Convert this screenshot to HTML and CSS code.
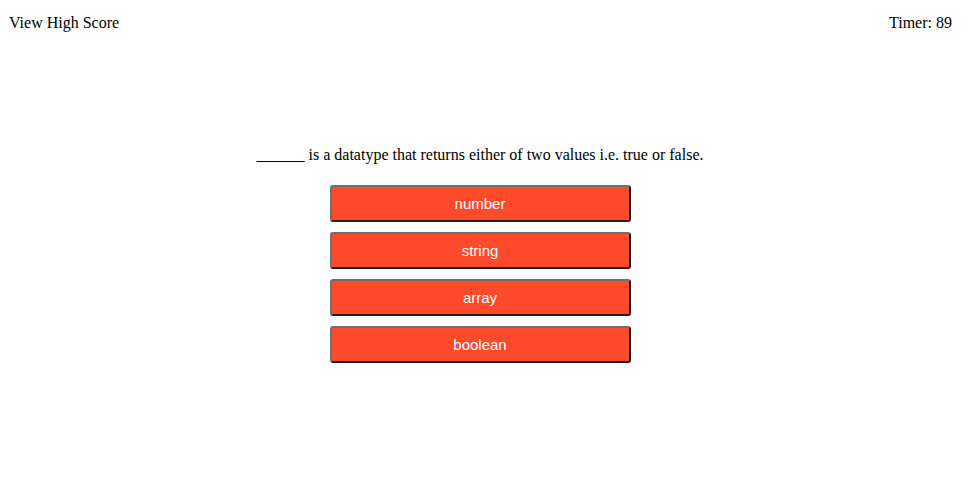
FILE: index.html
```html
<!DOCTYPE html>
<html>
<head>
<meta charset="utf-8">
<link rel="stylesheet" href="styles.css">
</head>
<body>
<header class="top">
  <a class="high">View High Score</a>
  <span class="timer">Timer: 89</span>
</header>
<main class="quiz">
  <p class="question">______ is a datatype that returns either of two values i.e. true or false.</p>
  <div class="answers">
    <button class="answer">number</button>
    <button class="answer">string</button>
    <button class="answer">array</button>
    <button class="answer">boolean</button>
  </div>
</main>
</body>
</html>
```
FILE: styles.css
```css
html, body {
  margin: 0;
  padding: 0;
  background: #fff;
}
body {
  font-family: "Liberation Serif", "Times New Roman", serif;
  font-size: 16px;
  color: #000;
}
.top {
  display: flex;
  justify-content: space-between;
  padding: 14px 18px 0 10px;
}
.high {
  margin-left: -1px;
}
.quiz {
  display: flex;
  flex-direction: column;
  align-items: center;
  padding-right: 10px;
  margin-top: 114px;
}
.question {
  margin: 0 0 21px 0;
}
.answers {
  display: flex;
  flex-direction: column;
  gap: 10px;
}
.answer {
  box-sizing: border-box;
  width: 301px;
  height: 37px;
  background: #ff4b2b;
  color: #fff;
  font-family: "Liberation Sans", Arial, sans-serif;
  font-size: 15px;
  border-width: 2px;
  border-style: solid;
  border-color: #6f6f6f #1f1f1f #1f1f1f #6f6f6f;
  border-radius: 3px;
  padding: 0;
}
```
